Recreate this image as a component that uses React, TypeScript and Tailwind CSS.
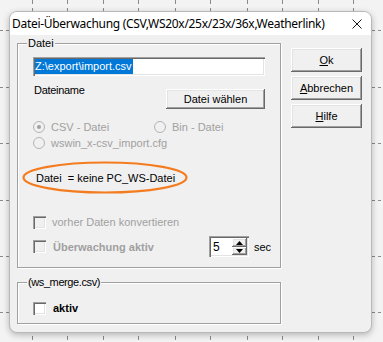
import React from "react";

const sunken =
  "shadow-[inset_1px_1px_0_#a0a0a0,inset_2px_2px_0_#696969,inset_-1px_-1px_0_#ffffff,inset_-2px_-2px_0_#e3e3e3]";
const raised =
  "shadow-[inset_-1px_-1px_0_#696969,inset_1px_1px_0_#ffffff,inset_-2px_-2px_0_#a0a0a0,inset_2px_2px_0_#e3e3e3]";

const Grid = () => {
  const xs = [32, 67, 103, 138, 175, 210, 247, 282, 318, 353];
  const ys = [30, 87, 143, 200, 256, 312];
  return (
    <svg className="absolute inset-0" width="383" height="342">
      {xs.map((x) => (
        <line key={"v" + x} x1={x + 0.5} y1={0} x2={x + 0.5} y2={342} stroke="#8a8a8a" strokeDasharray="4 4" />
      ))}
      {ys.map((y) => (
        <line key={"h" + y} x1={0} y1={y + 0.5} x2={383} y2={y + 0.5} stroke="#8a8a8a" strokeDasharray="3 3" />
      ))}
    </svg>
  );
};

const Radio = ({ checked }: { checked?: boolean }) => (
  <span className="w-[12px] h-[12px] rounded-full border border-[#b4b4b4] bg-[#f0f0f0] flex items-center justify-center shrink-0">
    {checked && <span className="w-[4px] h-[4px] rounded-full bg-[#a0a0a0]" />}
  </span>
);

const Check = ({ disabled }: { disabled?: boolean }) => (
  <span
    className={`w-[13px] h-[13px] shrink-0 ${sunken} ${disabled ? "bg-[#f0f0f0]" : "bg-white"}`}
  />
);

const Button = ({ children, className = "" }: { children: React.ReactNode; className?: string }) => (
  <div className={`bg-[#f0f0f0] ${raised} flex items-center justify-center text-black ${className}`}>
    {children}
  </div>
);

export default function App() {
  return (
    <div className="relative w-[383px] h-[342px] overflow-hidden bg-[#f3f3f3] font-['Liberation_Sans',Arial,sans-serif] text-[11px] leading-[14px]">
      <Grid />
      <div className="relative ml-[9px] mt-[11px] w-[363px] h-[322px] rounded-[8px] border border-[#b9b9b9] bg-[#f0f0f0] shadow-[0_2px_6px_rgba(0,0,0,0.25)] overflow-hidden">
        <div className="h-[23px] bg-white flex items-center justify-between pl-[2px] pr-[9px]">
          <span className="font-['Noto_Sans',sans-serif] text-[12px] tracking-[-0.3px] text-black whitespace-nowrap">
            Datei-Überwachung (CSV,WS20x/25x/23x/36x,Weatherlink)
          </span>
          <svg width="10" height="10" viewBox="0 0 10 10">
            <path d="M0.5 0.5 L9.5 9.5 M9.5 0.5 L0.5 9.5" stroke="#1a1a1a" strokeWidth="1" />
          </svg>
        </div>
        <div className="flex pl-[7px]">
          <div className="flex flex-col pt-[8px]">
            <div className="relative w-[264px] h-[225px] border border-[#a0a0a0] shadow-[inset_1px_1px_0_#ffffff,1px_1px_0_#ffffff] pl-[15px] pt-[13px] flex flex-col">
              <span className="absolute -top-[8px] left-[9px] px-[1px] bg-[#f0f0f0] text-black">Datei</span>
              <div className={`w-[232px] h-[19px] bg-white ${sunken} flex items-center pl-[2px]`}>
                <span className="bg-[#0078d7] text-white h-[15px] leading-[15px] pr-[1px]">Z:\export\import.csv</span>
              </div>
              <div className="flex justify-between w-[232px] mt-[7px]">
                <span className="text-black pl-[1px] tracking-[-0.3px]">Dateiname</span>
                <Button className="w-[99px] h-[20px] mt-[6px]">Datei wählen</Button>
              </div>
              <div className="flex items-center mt-[11px] h-[14px] text-[#a0a0a0]">
                <div className="flex items-center gap-[6px] w-[121px]">
                  <Radio checked />
                  <span>CSV - Datei</span>
                </div>
                <div className="flex items-center gap-[6px]">
                  <Radio />
                  <span>Bin - Datei</span>
                </div>
              </div>
              <div className="flex items-center gap-[6px] mt-[2px] h-[14px] text-[#a0a0a0]">
                <Radio />
                <span>wswin_x-csv_import.cfg</span>
              </div>
              <div className="mt-[21px] h-[14px] pl-[3px] text-black whitespace-pre">Datei  = keine PC_WS-Datei</div>
              <div className="flex items-center gap-[6px] mt-[30px] h-[14px] text-[#a0a0a0]">
                <Check disabled />
                <span>vorher Daten konvertieren</span>
              </div>
              <div className="flex items-center mt-[7px] h-[21px]">
                <div className="flex items-center gap-[7px] w-[176px] text-[#a0a0a0] font-bold">
                  <Check disabled />
                  <span>Überwachung aktiv</span>
                </div>
                <div className={`relative w-[40px] h-[21px] bg-white ${sunken} flex items-center pl-[4px] text-black`}>
                  <span className="text-[12px]">5</span>
                  <div className="absolute left-[23px] top-[2px] flex flex-col">
                    <div className={`w-[15px] h-[9px] bg-[#f0f0f0] ${raised} flex items-center justify-center`}>
                      <svg width="7" height="4" viewBox="0 0 7 4"><path d="M3.5 0 L7 4 L0 4 Z" fill="#000" /></svg>
                    </div>
                    <div className={`w-[15px] h-[8px] bg-[#f0f0f0] ${raised} flex items-center justify-center`}>
                      <svg width="7" height="4" viewBox="0 0 7 4"><path d="M0 0 L7 0 L3.5 4 Z" fill="#000" /></svg>
                    </div>
                  </div>
                </div>
                <span className="ml-[5px] text-black">sec</span>
              </div>
              <svg className="absolute left-[4px] top-[117px]" width="166" height="33" viewBox="0 0 166 33">
                <ellipse cx="83" cy="16.5" rx="81.5" ry="15" fill="none" stroke="#f47c20" strokeWidth="2.2" />
              </svg>
            </div>
            <div className="relative mt-[14px] w-[264px] h-[42px] border border-[#a0a0a0] shadow-[inset_1px_1px_0_#ffffff,1px_1px_0_#ffffff] pl-[15px] pt-[18px]">
              <span className="absolute -top-[8px] left-[9px] px-[1px] bg-[#f0f0f0] text-black tracking-[-0.4px]">(ws_merge.csv)</span>
              <div className="flex items-center gap-[7px] h-[14px]">
                <Check />
                <span className="font-bold text-black">aktiv</span>
              </div>
            </div>
          </div>
          <div className="ml-[10px] mt-[13px] flex flex-col gap-[4px]">
            <Button className="w-[71px] h-[24px]"><span><span className="underline">O</span>k</span></Button>
            <Button className="w-[71px] h-[24px]"><span><span className="underline">A</span>bbrechen</span></Button>
            <Button className="w-[71px] h-[24px]"><span><span className="underline">H</span>ilfe</span></Button>
          </div>
        </div>
      </div>
    </div>
  );
}
